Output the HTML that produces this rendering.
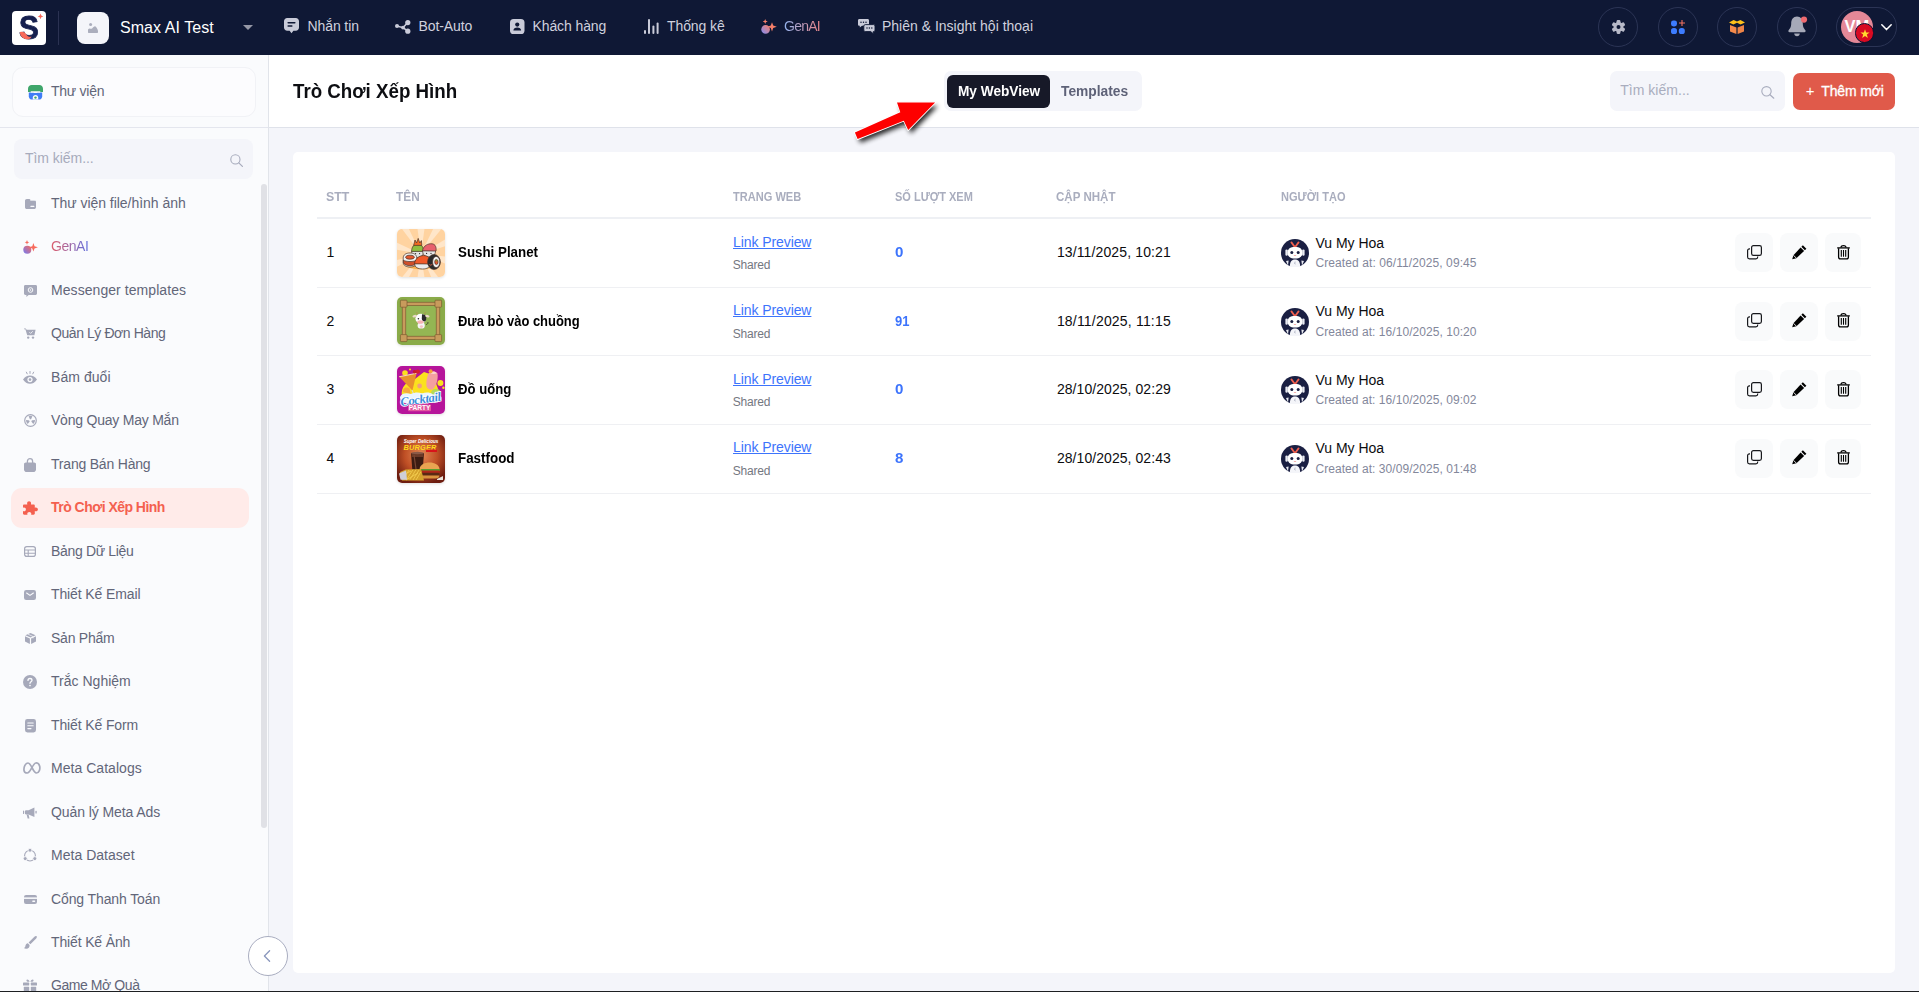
<!DOCTYPE html>
<html lang="vi"><head><meta charset="utf-8"><title>Trò Chơi Xếp Hình</title>
<style>
*{box-sizing:border-box;margin:0;padding:0}
html,body{width:1919px;height:992px;overflow:hidden}
body{font-family:"Liberation Sans",sans-serif;background:#f4f5fa;position:relative;color:#111}
.abs{position:absolute}
svg{display:block;overflow:visible}
#nav{position:absolute;left:0;top:0;width:1919px;height:55px;background:#0f1835}
#nav .t{position:absolute;top:15px;height:22px;line-height:22px;color:#cfd1de;font-size:14px;white-space:nowrap;letter-spacing:-.1px}
#nav .c{position:absolute;top:7px;width:40px;height:40px;border-radius:20px;border:1px solid #2b3455}
#side{position:absolute;left:0;top:55px;width:269px;height:937px;background:#fafbfd;border-right:1px solid #e1e4ea}
.it{position:absolute;left:51px;font-size:14px;color:#626679;white-space:nowrap;height:22px;line-height:22px;letter-spacing:-.05px}
#hdr{position:absolute;left:269px;top:55px;width:1650px;height:73px;background:#fff;border-bottom:1px solid #dfe2ea}
#card{position:absolute;left:293px;top:152px;width:1602px;height:820.5px;background:#fff;border-radius:5px}
.th{position:absolute;top:188px;height:16px;line-height:16px;font-size:11.5px;font-weight:bold;color:#a9adbe;white-space:nowrap}
.ln{position:absolute;left:317px;width:1554px;height:1px;background:#eff0f3}
.tx{position:absolute;white-space:nowrap;height:20px;line-height:20px;font-size:14px;color:#0c0c0f}
.sm{position:absolute;white-space:nowrap;height:16px;line-height:16px;font-size:12px;color:#7e8299}
.btn{position:absolute;height:39px;border-radius:8px;background:#f9fafb}

</style></head><body>
<div id="nav">
<!-- logo -->
<div class="abs" style="left:12px;top:11px;width:34px;height:34px;background:#fff;border-radius:4px;overflow:hidden">
<span class="abs" style="left:6.9px;top:-.4px;font-size:33px;line-height:34px;font-weight:bold;color:#16204f;-webkit-text-stroke:.9px #16204f;transform:scaleX(.9);transform-origin:0 0">S</span>
<svg class="abs" style="left:0;top:0" width="34" height="34" viewBox="0 0 34 34"><path d="M7.8 21.2 C10.5 20.3 13.2 21.2 14.3 23.4 C15.6 25.6 17.8 26.2 19.6 25.4 C18.6 28 15.4 29 12.6 27.8 C9.8 26.7 8 24.2 7.8 21.2Z" fill="#f8695a"/><path d="M28.5 2.6 L29.3 4.6 L31.3 5.4 L29.3 6.2 L28.5 8.2 L27.7 6.2 L25.7 5.4 L27.7 4.6Z" fill="#f8695a"/></svg>
</div>
<div class="abs" style="left:58px;top:11px;width:1px;height:34px;background:#2b3252"></div>
<div class="abs" style="left:77px;top:12px;width:32px;height:32px;background:#f4f5fa;border-radius:8px"></div>
<svg class="abs" style="left:88px;top:23px" width="10" height="10" viewBox="0 0 10 10"><circle cx="2.6" cy="1.6" r="1.5" fill="#abaebd"/><path d="M0.6 10 C0.1 10 0 9.6 0 9.2 V7 C0 6.3 0.7 5.4 1.5 5.4 C2.3 5.4 2.8 5.8 3.4 5.8 C4.2 5.8 5.6 3.2 6.9 3.2 C8.2 3.2 10 6.6 10 8.2 V9.2 C10 9.7 9.8 10 9.3 10Z" fill="#abaebd"/></svg>
<div class="t" style="left:120px;top:16px;font-size:16px;color:#fff;letter-spacing:.05px;line-height:24px;height:24px">Smax AI Test</div>
<svg class="abs" style="left:243px;top:25px" width="10" height="5" viewBox="0 0 10 5"><path d="M0 0H10L5 5Z" fill="#9597a6"/></svg>

<!-- Nhan tin -->
<svg class="abs" style="left:283.5px;top:18px" width="15" height="15.5" viewBox="0 0 15 15.5"><path d="M3.2 0H11.8C13.6 0 15 1.4 15 3.2V9.6C15 11.4 13.6 12.8 11.8 12.8H9.4L7.5 15.2L5.6 12.8H3.2C1.4 12.8 0 11.4 0 9.6V3.2C0 1.4 1.4 0 3.2 0Z" fill="#c9cbd9"/><rect x="3.4" y="4" width="8.2" height="1.6" rx=".8" fill="#0f1835"/><rect x="3.4" y="7.2" width="5.2" height="1.6" rx=".8" fill="#0f1835"/></svg>
<div class="t" style="left:307.5px">Nhắn tin</div>
<!-- Bot-auto -->
<svg class="abs" style="left:395px;top:19.5px" width="16" height="14" viewBox="0 0 16 14"><g fill="#c9cbd9"><circle cx="12.8" cy="2.6" r="2.6"/><circle cx="12.8" cy="11.2" r="2.6"/><circle cx="2" cy="6" r="2"/><circle cx="8" cy="7.6" r="1.9"/></g><path d="M2 6 L8 7.6 L12.8 2.6 M8 7.6 L12.8 11.2" stroke="#c9cbd9" stroke-width="1.5" fill="none"/></svg>
<div class="t" style="left:418.5px">Bot-Auto</div>
<!-- Khach hang -->
<svg class="abs" style="left:509.5px;top:18.5px" width="14.5" height="15" viewBox="0 0 14.5 15"><rect width="14.5" height="15" rx="3.6" fill="#c9cbd9"/><circle cx="7.25" cy="5.6" r="2.1" fill="#0f1835"/><path d="M3.4 11.6C3.4 9.6 5.1 8.6 7.25 8.6C9.4 8.6 11.1 9.6 11.1 11.6Z" fill="#0f1835"/></svg>
<div class="t" style="left:532.5px">Khách hàng</div>
<!-- Thong ke -->
<svg class="abs" style="left:643.5px;top:18.5px" width="15" height="15" viewBox="0 0 15 15"><g fill="#c9cbd9"><rect x="0" y="11" width="2" height="4" rx="1"/><rect x="4" y="0" width="2" height="15" rx="1"/><rect x="8.4" y="6.5" width="2" height="8.5" rx="1"/><rect x="12.6" y="3.5" width="2" height="11.5" rx="1"/></g></svg>
<div class="t" style="left:667px">Thống kê</div>
<!-- GenAI -->
<svg class="abs" style="left:760.5px;top:19px" width="16" height="15" viewBox="0 0 16 15"><defs><linearGradient id="gg1" x1="0" y1="1" x2="1" y2="0"><stop offset="0" stop-color="#7f8cf5"/><stop offset="1" stop-color="#f7806a"/></linearGradient></defs><circle cx="4.6" cy="10.4" r="4.3" fill="url(#gg1)"/><path d="M11 3.2L12.2 6.6L15.8 7.8L12.2 9L11 12.4L9.8 9L6.4 7.8L9.8 6.6Z" fill="#f7806a"/><path d="M4.2 0L4.9 1.8L6.7 2.5L4.9 3.2L4.2 5L3.5 3.2L1.7 2.5L3.5 1.8Z" fill="#f7806a"/></svg>
<div class="t" style="left:784px;letter-spacing:-.75px;background:linear-gradient(90deg,#92b3ee,#e8868a);-webkit-background-clip:text;background-clip:text;color:transparent">GenAI</div>
<!-- Phien -->
<svg class="abs" style="left:857.5px;top:18.5px" width="17" height="15" viewBox="0 0 17 15"><path d="M1.4 0H9.6C10.4 0 11 .6 11 1.4V5.4C11 6.2 10.4 6.8 9.6 6.8H4L1.8 8.6V6.8H1.4C.6 6.8 0 6.2 0 5.4V1.4C0 .6 .6 0 1.4 0Z" fill="#c9cbd9"/><path d="M7.2 5.6H15.6C16.4 5.6 17 6.2 17 7V11.2C17 12 16.4 12.6 15.6 12.6H15.2V14.8L12.8 12.6H7.2C6.4 12.6 5.8 12 5.8 11.2V7C5.8 6.2 6.4 5.6 7.2 5.6Z" fill="#c9cbd9" stroke="#0f1835" stroke-width=".9"/><g fill="#0f1835"><circle cx="3" cy="3.2" r=".75"/><circle cx="5.5" cy="3.2" r=".75"/><circle cx="8" cy="3.2" r=".75"/><circle cx="9" cy="9.1" r=".75"/><circle cx="11.4" cy="9.1" r=".75"/><circle cx="13.8" cy="9.1" r=".75"/></g></svg>
<div class="t" style="left:882px;letter-spacing:0">Phiên &amp; Insight hội thoại</div>

<!-- right icons -->
<div class="c" style="left:1598px"></div>
<svg class="abs" style="left:1610.5px;top:19.5px" width="15" height="14" viewBox="-7.5 -7 15 14"><g fill="#b8bac8"><circle r="4.9"/><g id="tth"><rect x="-1.9" y="-6.9" width="3.8" height="13.8" rx="1.1"/></g><use href="#tth" transform="rotate(60)"/><use href="#tth" transform="rotate(120)"/></g><circle r="2" fill="#0f1835"/></svg>
<div class="c" style="left:1658px"></div>
<svg class="abs" style="left:1671px;top:20px" width="14.5" height="14" viewBox="0 0 14.5 14"><g fill="#3d7cff"><rect x="0" y="0.4" width="6" height="6" rx="2.4"/><rect x="0" y="8" width="6" height="6" rx="2.6"/><rect x="7.8" y="8" width="6" height="6" rx="2.6"/></g><path d="M11 0V6M8 3H14" stroke="#f37360" stroke-width="1.1" fill="none"/></svg>
<div class="c" style="left:1717px"></div>
<svg class="abs" style="left:1729px;top:20px" width="16" height="14" viewBox="0 0 16 14"><path d="M0 2.4L4.6 0L8 1.6L11.4 0L16 2.4L11.6 4.4L8 2.8L4.4 4.4Z" fill="#ffc21a"/><path d="M1 5L7.4 7.4V14L1 11.4Z" fill="#f58a4b"/><path d="M15 5L8.6 7.4V14L15 11.4Z" fill="#ee8447"/></svg>
<div class="c" style="left:1777px"></div>
<svg class="abs" style="left:1788px;top:15.5px" width="19" height="21" viewBox="0 0 19 21"><path d="M9 0.5C5.2 0.5 3.2 3.6 3.2 7.2C3.2 11.4 1.8 12.6 .6 14.2C0 15 .5 16.2 1.6 16.2H16.4C17.5 16.2 18 15 17.4 14.2C16.2 12.6 14.8 11.4 14.8 7.2C14.8 3.6 12.8 .5 9 .5Z" fill="#a6a9b8"/><path d="M6.2 17.6H11.8C11.8 19.2 10.6 20.3 9 20.3C7.4 20.3 6.2 19.2 6.2 17.6Z" fill="#a6a9b8"/><circle cx="16" cy="3.6" r="3.1" fill="#ee6a6f"/></svg>
<div class="abs" style="left:1836px;top:7px;width:61px;height:40px;border-radius:20px;border:1px solid #2b3455"></div>
<div class="abs" style="left:1841px;top:11px;width:32px;height:32px;border-radius:16px;background:#e58b9b;color:#fff;font-weight:bold;font-size:16.5px;line-height:30.5px;padding-left:3.6px;overflow:hidden;letter-spacing:-.2px;background:#e48897">VM</div>
<div class="abs" style="left:1855.1px;top:23.2px;width:19.4px;height:19.4px;border-radius:10px;background:#d80a22;border:1.8px solid #0b1130"></div>
<svg class="abs" style="left:1859.9px;top:28.9px" width="10" height="10" viewBox="-4 -4 8 8"><path d="M0 -3.9L.9 -1.2H3.7L1.45 .45L2.3 3.15L0 1.5L-2.3 3.15L-1.45 .45L-3.7 -1.2H-.9Z" fill="#ffd92e"/></svg>
<svg class="abs" style="left:1881px;top:24px" width="11" height="7" viewBox="0 0 11 7"><path d="M.8 .8L5.5 5.6L10.2 .8" stroke="#fff" stroke-width="1.5" fill="none" stroke-linecap="round" stroke-linejoin="round"/></svg>
</div>
<div id="side">
<div class="abs" style="left:11.5px;top:12px;width:244px;height:49.5px;border:1px solid #f1f2f6;border-radius:11px;background:#fcfcfe"></div>
<svg class="abs" style="left:28.3px;top:29.8px" width="15" height="15" viewBox="0 0 15 15"><path d="M3.6 0H11.4C13.4 0 15 1.6 15 3.6V7H0V3.6C0 1.6 1.6 0 3.6 0Z" fill="#3fa66b"/><path d="M.8 7.6H14.2V11.2C14.2 13.2 12.8 14.6 10.8 14.6H4.2C2.2 14.6 .8 13.2 .8 11.2Z" fill="#3f7df6"/><path d="M2.6 6.2C2.6 7.6 4 8.2 5 7.2C6 8.4 9 8.4 10 7.2C11 8.2 12.4 7.6 12.4 6.2Z" fill="#fafbfd"/><path d="M4.8 14.6V12.6C4.8 11 6 10 7.5 10C9 10 10.2 11 10.2 12.6V14.6Z" fill="#fafbfd"/><circle cx="7.5" cy="12.6" r="1.2" fill="#3fa66b"/></svg>
<div class="it" style="left:51px;top:25px;letter-spacing:-.25px">Thư viện</div>
<div class="abs" style="left:0;top:72px;width:268px;height:1px;background:#e4e6ee"></div>
<div class="abs" style="left:14px;top:84px;width:239px;height:40px;border-radius:8px;background:#f4f5fa"></div>
<div class="it" style="left:25px;top:92px;color:#a7abbc">Tìm kiếm...</div>
<svg class="abs" style="left:229.5px;top:99px" width="13" height="13" viewBox="0 0 13 13"><circle cx="5.4" cy="5.4" r="4.6" fill="none" stroke="#a7abbc" stroke-width="1.1"/><path d="M8.8 8.8L12.4 12.4" stroke="#a7abbc" stroke-width="1.2" stroke-linecap="round"/></svg>
<div class="abs" style="left:261px;top:129px;width:6px;height:644px;border-radius:3px;background:#e0e1e6"></div>
<div class="abs" style="left:11px;top:433px;width:238px;height:39.5px;border-radius:11px;background:#ffebe9"></div>
<svg class="abs" style="left:24.5px;top:143.5px" width="11" height="10" viewBox="0 0 11 10"><path d="M1.8 0H4.6L5.8 1.2H9.2C10.2 1.2 11 2 11 3V8.2C11 9.2 10.2 10 9.2 10H1.8C.8 10 0 9.2 0 8.2V1.8C0 .8 .8 0 1.8 0Z" fill="#a6a9ba"/><rect x="5.4" y="6.8" width="4" height="1.1" rx=".5" fill="#fafbfd"/><path d="M5.2 1.4H10.2" stroke="#fafbfd" stroke-width=".6"/></svg><div class="it" style="top:137.00px;letter-spacing:-0.035px">Thư viện file/hình ảnh</div>
<svg class="abs" style="left:22.5px;top:184.5px" width="15" height="14" viewBox="0 0 15 14"><defs><linearGradient id="gg2" x1="0" y1="1" x2="1" y2="0"><stop offset="0" stop-color="#6f7bf7"/><stop offset="1" stop-color="#f76a5c"/></linearGradient></defs><circle cx="4.3" cy="9.8" r="4" fill="url(#gg2)"/><path d="M10.4 3L11.5 6.2L14.9 7.3L11.5 8.4L10.4 11.6L9.3 8.4L6 7.3L9.3 6.2Z" fill="#f76a5c"/><path d="M4 0L4.65 1.7L6.3 2.35L4.65 3L4 4.7L3.35 3L1.7 2.35L3.35 1.7Z" fill="#f76a5c"/></svg><div class="it" style="top:180.00px;letter-spacing:-0.461px;background:linear-gradient(90deg,#de5d6a,#6470dc);-webkit-background-clip:text;background-clip:text;color:transparent">GenAI</div>
<svg class="abs" style="left:23.5px;top:229.5px" width="13" height="12" viewBox="0 0 13 12"><path d="M1.4 0H11.6C12.4 0 13 .6 13 1.4V8.6C13 9.4 12.4 10 11.6 10H4.6L2.4 12V10H1.4C.6 10 0 9.4 0 8.6V1.4C0 .6 .6 0 1.4 0Z" fill="#a6a9ba"/><circle cx="6.5" cy="5" r="2.3" fill="none" stroke="#fafbfd" stroke-width="1"/><circle cx="6.5" cy="5" r=".8" fill="#fafbfd"/></svg><div class="it" style="top:224.00px;letter-spacing:0.066px">Messenger templates</div>
<svg class="abs" style="left:24.0px;top:273.0px" width="12" height="11" viewBox="0 0 12 11"><path d="M0 .4H1.8L2.6 1.8H11.6L10.4 7.2H3.2L1.4 1.2H0Z" fill="#a6a9ba"/><circle cx="4.2" cy="9.6" r="1.2" fill="#a6a9ba"/><circle cx="9" cy="9.6" r="1.2" fill="#a6a9ba"/><path d="M5.4 4.2L6.6 5.4L8.8 3.2" stroke="#fafbfd" stroke-width=".8" fill="none"/></svg><div class="it" style="top:267.00px;letter-spacing:-0.428px">Quản Lý Đơn Hàng</div>
<svg class="abs" style="left:23.0px;top:316.0px" width="14" height="13" viewBox="0 0 14 13"><path d="M0 8.6C1.8 5.8 4.2 4.4 7 4.4C9.8 4.4 12.2 5.8 14 8.6C12.2 11.4 9.8 12.8 7 12.8C4.2 12.8 1.8 11.4 0 8.6Z" fill="#a6a9ba"/><circle cx="7" cy="8.6" r="2.6" fill="#fafbfd"/><circle cx="7" cy="8.6" r="1.3" fill="#a6a9ba"/><path d="M7 0V2.8M3.2 .8L4.4 3.2M10.8 .8L9.6 3.2" stroke="#a6a9ba" stroke-width="1" fill="none"/></svg><div class="it" style="top:311.00px;letter-spacing:0.055px">Bám đuổi</div>
<svg class="abs" style="left:23.5px;top:359.0px" width="13" height="13" viewBox="0 0 13 13"><circle cx="6.5" cy="6.5" r="5.8" fill="none" stroke="#a6a9ba" stroke-width="1.2"/><g fill="#a6a9ba"><path d="M6.5 6.5L4.6 2.2A4.6 4.6 0 0 1 8.4 2.2Z"/><path d="M6.5 6.5L11 6A4.6 4.6 0 0 1 9.3 10Z"/><path d="M6.5 6.5L3.7 10A4.6 4.6 0 0 1 2 6Z"/></g><circle cx="6.5" cy="6.5" r="1.2" fill="#fafbfd"/></svg><div class="it" style="top:354.00px;letter-spacing:-0.224px">Vòng Quay May Mắn</div>
<svg class="abs" style="left:24.0px;top:402.5px" width="12" height="14" viewBox="0 0 12 14"><path d="M1.8 4.6H10.2C11.2 4.6 12 5.4 12 6.4V11.4C12 12.8 10.8 14 9.4 14H2.6C1.2 14 0 12.8 0 11.4V6.4C0 5.4 .8 4.6 1.8 4.6Z" fill="#a6a9ba"/><path d="M3.4 5.6V3.4C3.4 1.8 4.5 .7 6 .7C7.5 .7 8.6 1.8 8.6 3.4V5.6" stroke="#a6a9ba" stroke-width="1.3" fill="none"/></svg><div class="it" style="top:398.00px;letter-spacing:-0.201px">Trang Bán Hàng</div>
<svg class="abs" style="left:22.5px;top:445.5px" width="15" height="14" viewBox="0 0 15 14"><path d="M1.2 3.4H4.3C3.7 1.6 4.6 .2 6.1 .2C7.6 .2 8.5 1.6 7.9 3.4H10.6C11.3 3.4 11.8 3.9 11.8 4.6V6.7C13.5 6.1 14.9 7 14.9 8.4C14.9 9.8 13.5 10.7 11.8 10.1V12.6C11.8 13.3 11.3 13.8 10.6 13.8H8.1C8.7 12.2 7.8 11 6.3 11C4.8 11 3.9 12.2 4.5 13.8H1.2C.5 13.8 0 13.3 0 12.6V10C1.6 10.6 2.9 9.8 2.9 8.4C2.9 7 1.6 6.2 0 6.8V4.6C0 3.9 .5 3.4 1.2 3.4Z" fill="#f4604f"/></svg><div class="it" style="top:441.00px;letter-spacing:-0.52px;color:#f4604f;font-weight:bold">Trò Chơi Xếp Hình</div>
<svg class="abs" style="left:24.0px;top:491.0px" width="12" height="11" viewBox="0 0 12 11"><rect x=".6" y=".6" width="10.8" height="9.8" rx="2.2" fill="none" stroke="#a6a9ba" stroke-width="1.2"/><path d="M.6 4H11.4M.6 7.2H11.4M4.2 4V10.4" stroke="#a6a9ba" stroke-width="1.1" fill="none"/></svg><div class="it" style="top:485.00px;letter-spacing:-0.336px">Bảng Dữ Liệu</div>
<svg class="abs" style="left:24.0px;top:534.5px" width="12" height="10" viewBox="0 0 12 10"><rect width="12" height="10" rx="2.2" fill="#a6a9ba"/><path d="M2.6 3L6 5.4L9.4 3" stroke="#fafbfd" stroke-width="1.1" fill="none" stroke-linecap="round"/></svg><div class="it" style="top:528.00px;letter-spacing:-0.11px">Thiết Kế Email</div>
<svg class="abs" style="left:24.5px;top:578.0px" width="11" height="11" viewBox="0 0 11 11"><path d="M5.5 0L10.6 2.2L5.5 4.6L.4 2.2Z" fill="#a6a9ba"/><path d="M0 3.2L4.9 5.5V11L0 8.6Z" fill="#a6a9ba"/><path d="M11 3.2L6.1 5.5V11L11 8.6Z" fill="#a6a9ba"/><path d="M2.8 1.1L8 3.5V5.4" stroke="#fafbfd" stroke-width=".7" fill="none"/></svg><div class="it" style="top:572.00px;letter-spacing:-0.234px">Sản Phẩm</div>
<svg class="abs" style="left:23.0px;top:619.5px" width="14" height="14" viewBox="0 0 14 14"><circle cx="7" cy="7" r="7" fill="#a6a9ba"/><path d="M5 5.4C5 4.2 5.9 3.5 7 3.5C8.1 3.5 9 4.2 9 5.3C9 6.7 7 6.8 7 8.3" stroke="#fafbfd" stroke-width="1.3" fill="none" stroke-linecap="round"/><circle cx="7" cy="10.5" r=".85" fill="#fafbfd"/></svg><div class="it" style="top:615.00px;letter-spacing:0.016px">Trắc Nghiệm</div>
<svg class="abs" style="left:24.5px;top:663.8px" width="11" height="13.5" viewBox="0 0 11 13.5"><rect width="11" height="13.5" rx="2.4" fill="#a6a9ba"/><path d="M2.8 4H8.2M2.8 6.8H8.2M2.8 9.6H6" stroke="#fafbfd" stroke-width="1.1" fill="none" stroke-linecap="round"/></svg><div class="it" style="top:659.00px;letter-spacing:-0.123px">Thiết Kế Form</div>
<svg class="abs" style="left:22.9px;top:706.9px" width="17.8" height="12" viewBox="0 0 17.8 12"><path d="M1 8.4C.6 5 2.4 1 5 1C8.2 1 10.2 11 13.4 11C16.2 11 17.4 7 16.6 4C16 2 14.4.8 12.8 1C9.6 1.6 7.6 11 4.2 11C2.4 11 1.2 10 1 8.4Z" fill="none" stroke="#a6a9ba" stroke-width="1.7" stroke-linejoin="round"/></svg><div class="it" style="top:702.00px;letter-spacing:0.04px">Meta Catalogs</div>
<svg class="abs" style="left:23.0px;top:751.5px" width="14" height="12" viewBox="0 0 14 12"><path d="M3.2 3.2H5.6L11.4 .4V10L5.6 7.4H3.2C2.4 7.4 1.8 6.8 1.8 6V4.6C1.8 3.8 2.4 3.2 3.2 3.2Z" fill="#a6a9ba"/><path d="M3.6 7.6L4.6 11.4H6.4L5.6 7.6Z" fill="#a6a9ba"/><rect x="0" y="3.6" width="1" height="3.4" rx=".5" fill="#a6a9ba"/><rect x="12.4" y="3.8" width="1.3" height="2.8" rx=".6" fill="#a6a9ba"/></svg><div class="it" style="top:746.00px;letter-spacing:-0.082px">Quản lý Meta Ads</div>
<svg class="abs" style="left:23.0px;top:793.3px" width="14" height="14.4" viewBox="0 0 14 14.4"><circle cx="7" cy="7.6" r="5.4" fill="none" stroke="#a6a9ba" stroke-width="1.1"/><g fill="#a6a9ba" stroke="#fafbfd" stroke-width=".9"><circle cx="7" cy="2.2" r="2"/><circle cx="2.2" cy="10.6" r="2"/><circle cx="11.8" cy="10.6" r="2"/></g></svg><div class="it" style="top:789.00px;letter-spacing:0.028px">Meta Dataset</div>
<svg class="abs" style="left:23.5px;top:840.0px" width="13" height="9" viewBox="0 0 13 9"><rect width="13" height="9" rx="2" fill="#a6a9ba"/><rect x="0" y="2.4" width="13" height="1.5" fill="#fafbfd"/><rect x="8.2" y="5.6" width="3" height="1.3" rx=".6" fill="#fafbfd"/></svg><div class="it" style="top:833.00px;letter-spacing:-0.113px">Cổng Thanh Toán</div>
<svg class="abs" style="left:23.5px;top:881.0px" width="13" height="13" viewBox="0 0 13 13"><path d="M12.6 .3C13.2.9 12.8 1.8 12.2 2.4L6.4 8.2L4.6 6.4L10.4.8C11 .2 12 -.2 12.6 .3Z" fill="#a6a9ba"/><path d="M3.9 7.2L5.6 8.9C5.8 11 4.4 12.6 2.4 12.8C1.4 12.9.4 12.6 0 12C1.2 11.6 1.3 10.6 1.5 9.6C1.7 8.4 2.6 7.4 3.9 7.2Z" fill="#a6a9ba"/></svg><div class="it" style="top:876.00px;letter-spacing:-0.145px">Thiết Kế Ảnh</div>
<svg class="abs" style="left:23.0px;top:924.0px" width="14" height="13" viewBox="0 0 14 13"><rect x="0" y="3.6" width="6.2" height="3" rx=".6" fill="#a6a9ba"/><rect x="7.8" y="3.6" width="6.2" height="3" rx=".6" fill="#a6a9ba"/><rect x=".8" y="7.8" width="5.4" height="5.2" rx=".6" fill="#a6a9ba"/><rect x="7.8" y="7.8" width="5.4" height="5.2" rx=".6" fill="#a6a9ba"/><path d="M6.6 2.8C5.2 2.8 3.4 2.6 3.4 1.4C3.4 0 5.8 0 6.6 2.8ZM7.4 2.8C8.8 2.8 10.6 2.6 10.6 1.4C10.6 0 8.2 0 7.4 2.8Z" fill="#a6a9ba"/></svg><div class="it" style="top:919.00px;letter-spacing:-0.429px">Game Mở Quà</div>
<div class="abs" style="left:248px;top:880.5px;width:40px;height:40px;border-radius:20px;background:#fff;border:1px solid #a9adc0"></div>
<svg class="abs" style="left:263px;top:894.5px" width="8" height="12" viewBox="0 0 8 12"><path d="M6.6 .8L1.4 6L6.6 11.2" stroke="#8a97bd" stroke-width="1.3" fill="none" stroke-linecap="round" stroke-linejoin="round"/></svg>
</div>
<div id="hdr">
<div class="abs" style="left:23.70px;top:21.37px;height:30px;line-height:30px;font-size:20px;color:#0d0e12;white-space:nowrap;font-weight:bold;transform:scaleX(0.9364);transform-origin:0 0">Trò Chơi Xếp Hình</div><div class="abs" style="left:675px;top:16px;width:198px;height:39.5px;border-radius:7px;background:#f4f5fa"></div>
<div class="abs" style="left:678px;top:19.5px;width:103px;height:33px;border-radius:6px;background:#171928"></div>
<div class="abs" style="left:688.60px;top:26.05px;height:21px;line-height:21px;font-size:14px;color:#fff;white-space:nowrap;font-weight:bold;transform:scaleX(0.9751);transform-origin:0 0">My WebView</div><div class="abs" style="left:791.60px;top:26.05px;height:21px;line-height:21px;font-size:14px;color:#5e6278;white-space:nowrap;font-weight:bold;transform:scaleX(0.9851);transform-origin:0 0">Templates</div><div class="abs" style="left:1341px;top:16px;width:175px;height:40px;border-radius:7px;background:#f4f5fa"></div>
<div class="abs" style="left:1351.20px;top:24.95px;height:21px;line-height:21px;font-size:14px;color:#a9adbe;white-space:nowrap;letter-spacing:0.033px">Tìm kiếm...</div><svg class="abs" style="left:1492px;top:30.6px" width="13.4" height="12.8" viewBox="0 0 13.4 12.8"><circle cx="5.5" cy="5.3" r="4.7" fill="none" stroke="#a9adbe" stroke-width="1.1"/><path d="M9 8.7L12.8 12.2" stroke="#a9adbe" stroke-width="1.2" stroke-linecap="round"/></svg>
<div class="abs" style="left:1524px;top:18px;width:102px;height:36.7px;border-radius:7px;background:#e05a4a"></div>
<div class="abs" style="left:1536.80px;top:25.00px;height:22px;line-height:22px;font-size:15px;color:#fff;white-space:nowrap">+</div><div class="abs" style="left:1552.30px;top:25.55px;height:21px;line-height:21px;font-size:14px;color:#fff;white-space:nowrap;letter-spacing:-0.155px;-webkit-text-stroke:.3px #fff">Thêm mới</div></div>
<!-- red arrow annotation -->
<svg class="abs" style="left:840px;top:90px;z-index:5" width="120" height="70" viewBox="840 90 120 70">
<defs><filter id="ash" filterUnits="userSpaceOnUse" x="840" y="90" width="120" height="70"><feGaussianBlur stdDeviation="2.7"/></filter></defs>
<path d="M857.6 139.1L854.9 132.4L900.3 112.2L897 102.5L935.1 102.5L908.2 130L903.8 120.7Z" fill="#000" opacity=".85" filter="url(#ash)" transform="translate(2.8,3.6)"/>
<path d="M857.6 139.1L854.9 132.4L900.3 112.2L897 102.5L935.1 102.5L908.2 130L903.8 120.7Z" fill="#fe0000" stroke="#fff" stroke-width="1.6" stroke-linejoin="miter" paint-order="stroke"/>
</svg>
<div id="card"></div>
<div class="abs" style="left:326.10px;top:186.70px;height:20px;line-height:20px;font-size:13px;color:#a9adbe;white-space:nowrap;font-weight:bold;transform:scaleX(0.9486);transform-origin:0 0">STT</div><div class="abs" style="left:396.10px;top:186.70px;height:20px;line-height:20px;font-size:13px;color:#a9adbe;white-space:nowrap;font-weight:bold;transform:scaleX(0.9115);transform-origin:0 0">TÊN</div><div class="abs" style="left:732.70px;top:186.70px;height:20px;line-height:20px;font-size:13px;color:#a9adbe;white-space:nowrap;font-weight:bold;transform:scaleX(0.8507);transform-origin:0 0">TRANG WEB</div><div class="abs" style="left:894.90px;top:186.70px;height:20px;line-height:20px;font-size:13px;color:#a9adbe;white-space:nowrap;font-weight:bold;transform:scaleX(0.8473);transform-origin:0 0">SỐ LƯỢT XEM</div><div class="abs" style="left:1056.10px;top:186.70px;height:20px;line-height:20px;font-size:13px;color:#a9adbe;white-space:nowrap;font-weight:bold;transform:scaleX(0.8889);transform-origin:0 0">CẬP NHẬT</div><div class="abs" style="left:1280.60px;top:186.70px;height:20px;line-height:20px;font-size:13px;color:#a9adbe;white-space:nowrap;font-weight:bold;transform:scaleX(0.8482);transform-origin:0 0">NGƯỜI TẠO</div>
<div class="ln" style="top:217px;height:2px;background:#eef0f4"></div>
<div class="ln" style="top:287px"></div>
<div class="abs" style="left:326.60px;top:241.85px;height:21px;line-height:21px;font-size:14px;color:#0c0c0f;white-space:nowrap">1</div><svg class="abs" style="left:397px;top:229px;border-radius:5px;overflow:hidden;box-shadow:0 1px 3px rgba(0,0,0,.13)" width="48" height="48" viewBox="0 0 48 48"><rect width="48" height="48" fill="#ffd3a0"/><g fill="#ffe6c9"><path d="M24 25L20 -4H28Z"/><path d="M24 25L38 -4L46 -2Z"/><path d="M24 25L52 8V16Z"/><path d="M24 25L52 28V36Z"/><path d="M24 25L44 52H36Z"/><path d="M24 25L28 52H20Z"/><path d="M24 25L10 52H2Z"/><path d="M24 25L-4 40V32Z"/><path d="M24 25L-4 20V12Z"/><path d="M24 25L2 -4H10Z"/></g>
<ellipse cx="24" cy="37" rx="14" ry="3.2" fill="#f9b04e"/>
<g stroke="#4a3328" stroke-width=".7">
<path d="M14.6 22C14.6 26.4 17 28.6 20.6 28.6C24.2 28.6 26.6 26.4 26.6 22Z" fill="#e3e3e3"/><path d="M14.6 22.4C14.6 17.4 17.4 15 20.6 15C23.8 15 26.6 17.4 26.6 22.4Z" fill="#8fbd3f"/><path d="M16.6 16.4L18 11L19.6 14L21.2 9.4L22.8 14L24.4 11.6L24.8 16.4Z" fill="#f26a21"/>
<path d="M25.6 21.6C25.6 26 28.4 28 32 28C35.6 28 38.6 26 38.6 21.6Z" fill="#e6e6e6"/><path d="M25.4 21.8C26.6 16.4 31 14.4 35.2 14.8C38.4 15.2 39.6 18.4 39 22Z" fill="#e8616d"/>
<path d="M6.2 29C6.2 25.6 9.2 24 13 24C16.8 24 19.8 25.6 19.8 29V33.6C19.8 36.4 16.8 38 13 38C9.2 38 6.2 36.4 6.2 33.6Z" fill="#f3f3f3"/><path d="M6.4 31C8.4 33 17.6 33 19.6 31V34C17.6 37.6 8.4 37.6 6.4 34Z" fill="#cf4f2a"/><ellipse cx="13" cy="28.2" rx="4.4" ry="2" fill="#e4572e"/>
<path d="M17.6 34.6C17.6 38.4 21 40 25.6 40C30.2 40 33.6 38 33.6 34.4Z" fill="#ececec"/><path d="M17.4 34.8C18.4 28.6 23.6 25.6 28.8 26.8C32.6 27.8 34.4 31 33.8 35Z" fill="#f15a29"/>
<ellipse cx="37" cy="33" rx="6.4" ry="7.4" fill="#2a2a2a"/><ellipse cx="39.2" cy="33" rx="3.6" ry="5.6" fill="#f3f3f3"/><ellipse cx="39.4" cy="33" rx="1.7" ry="2.6" fill="#e4572e"/><path d="M39 30.6L39.8 32.6" stroke="#6aa82e" stroke-width="1"/>
</g><circle cx="18.6" cy="24.6" r=".6" fill="#222"/><circle cx="22.6" cy="24.6" r=".6" fill="#222"/><circle cx="29.6" cy="24.4" r=".6" fill="#222"/><circle cx="34" cy="24.4" r=".6" fill="#222"/><path d="M32.4 35.4C33.4 36.6 34.6 36.4 35 35.2" stroke="#f26a4a" stroke-width=".8" fill="none"/></svg><div class="abs" style="left:458.10px;top:241.85px;height:21px;line-height:21px;font-size:14px;color:#000;white-space:nowrap;font-weight:bold;transform:scaleX(0.9520);transform-origin:0 0">Sushi Planet</div><div class="abs" style="left:733.00px;top:231.85px;height:21px;line-height:21px;font-size:14px;color:#3d74fc;white-space:nowrap;letter-spacing:-0.081px;text-decoration:underline;text-underline-offset:.6px;text-decoration-thickness:1px">Link Preview</div><div class="abs" style="left:732.70px;top:256.04px;height:18px;line-height:18px;font-size:12px;color:#74777f;white-space:nowrap;letter-spacing:-0.184px">Shared</div><div class="abs" style="left:895.20px;top:241.85px;height:21px;line-height:21px;font-size:14px;color:#3d74fc;white-space:nowrap;font-weight:bold;transform:scaleX(1.0774);transform-origin:0 0">0</div><div class="abs" style="left:1056.90px;top:241.85px;height:21px;line-height:21px;font-size:14px;color:#0c0c0f;white-space:nowrap;letter-spacing:0.127px">13/11/2025, 10:21</div><svg class="abs" style="left:1281px;top:238.8px" width="28" height="28" viewBox="0 0 28 28"><circle cx="14" cy="14" r="14" fill="#1a1f42"/><path d="M10.4 3.4L14 8.2L17.6 3.4" stroke="#f0604f" stroke-width="1.8" fill="none" stroke-linecap="round" stroke-linejoin="round"/><rect x="4.4" y="10.4" width="2.4" height="6.4" rx="1.2" fill="#e9ebf2"/><rect x="21.2" y="10.4" width="2.4" height="6.4" rx="1.2" fill="#e9ebf2"/><rect x="6.6" y="8" width="14.8" height="11.4" rx="5.4" fill="#fff"/><circle cx="10.8" cy="13.4" r="1.5" fill="#1a1f42"/><circle cx="17.2" cy="13.4" r="1.5" fill="#1a1f42"/><rect x="12.8" y="16.2" width="2.4" height=".9" rx=".4" fill="#f29a94"/><path d="M8.8 28C8.8 23 10.6 20.6 14 20.6C17.4 20.6 19.2 23 19.2 28Z" fill="#f4f5f9"/><path d="M5 22L7.6 21.4L7 26.6Z" fill="#e9ebf2"/><path d="M23 22L20.4 21.4L21 26.6Z" fill="#e9ebf2"/><path d="M14.2 22.6L13.6 24.6L14.6 25" stroke="#8c90a8" stroke-width=".6" fill="none"/></svg><div class="abs" style="left:1315.50px;top:232.65px;height:21px;line-height:21px;font-size:14px;color:#0c0c0f;white-space:nowrap;letter-spacing:-0.015px">Vu My Hoa</div><div class="abs" style="left:1315.50px;top:253.84px;height:18px;line-height:18px;font-size:12px;color:#83879b;white-space:nowrap;letter-spacing:0.087px">Created at: 06/11/2025, 09:45</div><div class="btn" style="left:1735px;top:232.8px;width:38px"></div><div class="btn" style="left:1780px;top:232.8px;width:38px"></div><div class="btn" style="left:1825px;top:232.8px;width:36px"></div><svg class="abs" style="left:1746.5px;top:244.5px" width="15" height="14.5" viewBox="0 0 15 14.5"><rect x="4.6" y=".6" width="9.8" height="9.8" rx="1.8" fill="none" stroke="#17181c" stroke-width="1.2"/><path d="M3 3.8H2.4C1.4 3.8 .6 4.6 .6 5.6V12.1C.6 13.1 1.4 13.9 2.4 13.9H8.9C9.9 13.9 10.7 13.1 10.7 12.1V11.6" fill="none" stroke="#17181c" stroke-width="1.2"/></svg><svg class="abs" style="left:1791.5px;top:244.5px" width="15" height="14.5" viewBox="0 0 15 14.5"><path d="M10.9 .3L14.4 3.7L12.9 5.2L9.4 1.8Z" fill="#000"/><path d="M8.6 2.6L12.1 6L4.4 13.2L.2 14.3L1.4 10.2Z" fill="#000"/><path d="M1.4 10.2L4.4 13.2" stroke="#f9fafb" stroke-width=".9"/></svg><svg class="abs" style="left:1836.5px;top:244.5px" width="13" height="14.5" viewBox="0 0 13 14.5"><path d="M.2 2.9H12.8" stroke="#000" stroke-width="1.3"/><path d="M4 2.6C4 1.2 5 .6 6.5 .6C8 .6 9 1.2 9 2.6" stroke="#000" stroke-width="1.2" fill="none"/><path d="M1.6 3.2V12C1.6 13.1 2.4 13.9 3.5 13.9H9.5C10.6 13.9 11.4 13.1 11.4 12V3.2" stroke="#000" stroke-width="1.3" fill="none"/><path d="M4.3 5V11.8M6.5 5V11.8M8.7 5V11.8" stroke="#000" stroke-width="1.1"/></svg>
<div class="ln" style="top:355px"></div>
<div class="abs" style="left:326.60px;top:310.55px;height:21px;line-height:21px;font-size:14px;color:#0c0c0f;white-space:nowrap">2</div><svg class="abs" style="left:397px;top:297px;border-radius:5px;overflow:hidden;box-shadow:0 1px 3px rgba(0,0,0,.13)" width="48" height="48" viewBox="0 0 48 48"><rect width="48" height="48" fill="#8aab49"/><rect x="8" y="8" width="32" height="32" fill="#94b653"/><g fill="#c89b5c" stroke="#73522a" stroke-width=".6"><rect x="5" y="5.2" width="38" height="3.4"/><rect x="5" y="39.2" width="38" height="3.4"/><rect x="5.2" y="5" width="3.6" height="38"/><rect x="39.2" y="5" width="3.6" height="38"/><rect x="3.4" y="3.2" width="6.6" height="7" rx=".8"/><rect x="38" y="3.2" width="6.6" height="7" rx=".8"/><rect x="3.4" y="37.6" width="6.6" height="7" rx=".8"/><rect x="38" y="37.6" width="6.6" height="7" rx=".8"/></g>
<path d="M29.2 27.6C30.8 27.2 31.2 25.8 30.8 25" stroke="#3d3d2a" stroke-width=".9" fill="none"/>
<ellipse cx="24.2" cy="28.4" rx="3.6" ry="3.2" fill="#f6f6f6"/><ellipse cx="24.4" cy="29.6" rx="1.6" ry="1.3" fill="#f7c4c4"/><ellipse cx="23.8" cy="21.6" rx="5.4" ry="4.9" fill="#fdfdfd"/><path d="M25 17.2C28.6 17 30 20 29 23.2C27.8 25.4 25.2 24.6 24.8 22Z" fill="#2a2a2a"/><ellipse cx="23.4" cy="25" rx="3.2" ry="1.8" fill="#f6b3b3"/><ellipse cx="17.6" cy="19.2" rx="2.2" ry="1.2" fill="#ead7c8" transform="rotate(-15 17.6 19.2)"/><ellipse cx="30.4" cy="19.2" rx="2.2" ry="1.2" fill="#ead7c8" transform="rotate(15 30.4 19.2)"/><circle cx="21.4" cy="21.8" r=".8" fill="#222"/><path d="M20.4 16.8L19.6 15.2M27.6 16.8L28.4 15.2" stroke="#b58a52" stroke-width=".9"/></svg><div class="abs" style="left:458.10px;top:310.55px;height:21px;line-height:21px;font-size:14px;color:#000;white-space:nowrap;font-weight:bold;transform:scaleX(0.9256);transform-origin:0 0">Đưa bò vào chuồng</div><div class="abs" style="left:733.00px;top:299.85px;height:21px;line-height:21px;font-size:14px;color:#3d74fc;white-space:nowrap;letter-spacing:-0.081px;text-decoration:underline;text-underline-offset:.6px;text-decoration-thickness:1px">Link Preview</div><div class="abs" style="left:732.70px;top:324.74px;height:18px;line-height:18px;font-size:12px;color:#74777f;white-space:nowrap;letter-spacing:-0.184px">Shared</div><div class="abs" style="left:895.20px;top:310.55px;height:21px;line-height:21px;font-size:14px;color:#3d74fc;white-space:nowrap;font-weight:bold;transform:scaleX(0.9308);transform-origin:0 0">91</div><div class="abs" style="left:1056.90px;top:310.55px;height:21px;line-height:21px;font-size:14px;color:#0c0c0f;white-space:nowrap;letter-spacing:0.188px">18/11/2025, 11:15</div><svg class="abs" style="left:1281px;top:307.5px" width="28" height="28" viewBox="0 0 28 28"><circle cx="14" cy="14" r="14" fill="#1a1f42"/><path d="M10.4 3.4L14 8.2L17.6 3.4" stroke="#f0604f" stroke-width="1.8" fill="none" stroke-linecap="round" stroke-linejoin="round"/><rect x="4.4" y="10.4" width="2.4" height="6.4" rx="1.2" fill="#e9ebf2"/><rect x="21.2" y="10.4" width="2.4" height="6.4" rx="1.2" fill="#e9ebf2"/><rect x="6.6" y="8" width="14.8" height="11.4" rx="5.4" fill="#fff"/><circle cx="10.8" cy="13.4" r="1.5" fill="#1a1f42"/><circle cx="17.2" cy="13.4" r="1.5" fill="#1a1f42"/><rect x="12.8" y="16.2" width="2.4" height=".9" rx=".4" fill="#f29a94"/><path d="M8.8 28C8.8 23 10.6 20.6 14 20.6C17.4 20.6 19.2 23 19.2 28Z" fill="#f4f5f9"/><path d="M5 22L7.6 21.4L7 26.6Z" fill="#e9ebf2"/><path d="M23 22L20.4 21.4L21 26.6Z" fill="#e9ebf2"/><path d="M14.2 22.6L13.6 24.6L14.6 25" stroke="#8c90a8" stroke-width=".6" fill="none"/></svg><div class="abs" style="left:1315.50px;top:301.35px;height:21px;line-height:21px;font-size:14px;color:#0c0c0f;white-space:nowrap;letter-spacing:-0.015px">Vu My Hoa</div><div class="abs" style="left:1315.50px;top:322.54px;height:18px;line-height:18px;font-size:12px;color:#83879b;white-space:nowrap;letter-spacing:0.056px">Created at: 16/10/2025, 10:20</div><div class="btn" style="left:1735px;top:301.5px;width:38px"></div><div class="btn" style="left:1780px;top:301.5px;width:38px"></div><div class="btn" style="left:1825px;top:301.5px;width:36px"></div><svg class="abs" style="left:1746.5px;top:313.2px" width="15" height="14.5" viewBox="0 0 15 14.5"><rect x="4.6" y=".6" width="9.8" height="9.8" rx="1.8" fill="none" stroke="#17181c" stroke-width="1.2"/><path d="M3 3.8H2.4C1.4 3.8 .6 4.6 .6 5.6V12.1C.6 13.1 1.4 13.9 2.4 13.9H8.9C9.9 13.9 10.7 13.1 10.7 12.1V11.6" fill="none" stroke="#17181c" stroke-width="1.2"/></svg><svg class="abs" style="left:1791.5px;top:313.2px" width="15" height="14.5" viewBox="0 0 15 14.5"><path d="M10.9 .3L14.4 3.7L12.9 5.2L9.4 1.8Z" fill="#000"/><path d="M8.6 2.6L12.1 6L4.4 13.2L.2 14.3L1.4 10.2Z" fill="#000"/><path d="M1.4 10.2L4.4 13.2" stroke="#f9fafb" stroke-width=".9"/></svg><svg class="abs" style="left:1836.5px;top:313.2px" width="13" height="14.5" viewBox="0 0 13 14.5"><path d="M.2 2.9H12.8" stroke="#000" stroke-width="1.3"/><path d="M4 2.6C4 1.2 5 .6 6.5 .6C8 .6 9 1.2 9 2.6" stroke="#000" stroke-width="1.2" fill="none"/><path d="M1.6 3.2V12C1.6 13.1 2.4 13.9 3.5 13.9H9.5C10.6 13.9 11.4 13.1 11.4 12V3.2" stroke="#000" stroke-width="1.3" fill="none"/><path d="M4.3 5V11.8M6.5 5V11.8M8.7 5V11.8" stroke="#000" stroke-width="1.1"/></svg>
<div class="ln" style="top:424px"></div>
<div class="abs" style="left:326.60px;top:379.15px;height:21px;line-height:21px;font-size:14px;color:#0c0c0f;white-space:nowrap">3</div><svg class="abs" style="left:397px;top:366px;border-radius:5px;overflow:hidden;box-shadow:0 1px 3px rgba(0,0,0,.13)" width="48" height="48" viewBox="0 0 48 48"><rect width="48" height="48" fill="#b6159a"/><g fill="#fbe11e"><circle cx="8" cy="7" r="2.8"/><circle cx="13" cy="3.6" r="1"/><circle cx="43.4" cy="17" r="3"/><circle cx="46.4" cy="21.8" r="1.2"/><path d="M5 30C3 22 10 14 18 13L27 6L36 9L40 20C43 26 40 31 34 32L10 34Z"/></g>
<path d="M2 10.6L19.6 7.2L15.4 24.4Z" fill="#e8912d"/><path d="M2 10.2L19.6 6.8L19.8 7.8L2.4 11.2Z" fill="#f5d9b4"/><path d="M15 24L17.4 30" stroke="#d9d9e6" stroke-width="1"/>
<circle cx="20.8" cy="5.6" r="2.2" fill="#d41f2f"/><circle cx="17.6" cy="5.8" r="1.8" fill="#c8192a"/>
<path d="M31.6 7.6C34 4.6 39 4.8 40.4 7.6C41.6 13 39 20.6 35.6 23.6C32.6 24 30 22.6 29.4 20C29 15.6 30 10.6 31.6 7.6Z" fill="#f4a0a0"/><path d="M33 6.8C35 5 38.6 5.2 39.8 7.2C37.6 8.4 34.8 8.2 33 6.8Z" fill="#fbd5cf"/><circle cx="33.6" cy="5.2" r="2" fill="#f5a13a"/>
<path d="M34 26C36 21.6 42 21.6 43.6 25.6L42 30H35Z" fill="#b6d957"/><circle cx="22.6" cy="20" r="2.4" fill="#f2a07a"/><path d="M6 26C5 22.6 9.6 20 12.6 22.6L13.6 28Z" fill="#f7a93b"/>
<path d="M3 31C5 26.6 10 26.6 14 28C18 26 22 26 25 27.6C29 26 33 26.4 36 28.4C40 27.6 44.6 29 44.6 32C44.6 36 40 37 36 36.6L12 37.6C7 38 2.6 35 3 31Z" fill="#e9f4ff"/>
<text x="23.6" y="37.4" text-anchor="middle" font-family="Liberation Serif,serif" font-style="italic" font-weight="bold" font-size="12.5" fill="#3a8ddb" stroke="#fff" stroke-width="1.6" paint-order="stroke" transform="rotate(-8 24 34)" letter-spacing="-.3">Cocktail</text>
<rect x="11" y="38.6" width="23" height="6.6" rx="1" fill="#e2559f"/><text x="22.6" y="44.3" text-anchor="middle" font-family="Liberation Sans,sans-serif" font-weight="bold" font-size="6.6" fill="#fff">PARTY</text></svg><div class="abs" style="left:458.10px;top:379.15px;height:21px;line-height:21px;font-size:14px;color:#000;white-space:nowrap;font-weight:bold;transform:scaleX(0.9372);transform-origin:0 0">Đồ uống</div><div class="abs" style="left:733.00px;top:368.85px;height:21px;line-height:21px;font-size:14px;color:#3d74fc;white-space:nowrap;letter-spacing:-0.081px;text-decoration:underline;text-underline-offset:.6px;text-decoration-thickness:1px">Link Preview</div><div class="abs" style="left:732.70px;top:393.34px;height:18px;line-height:18px;font-size:12px;color:#74777f;white-space:nowrap;letter-spacing:-0.184px">Shared</div><div class="abs" style="left:895.20px;top:379.15px;height:21px;line-height:21px;font-size:14px;color:#3d74fc;white-space:nowrap;font-weight:bold;transform:scaleX(1.0774);transform-origin:0 0">0</div><div class="abs" style="left:1056.90px;top:379.15px;height:21px;line-height:21px;font-size:14px;color:#0c0c0f;white-space:nowrap;letter-spacing:0.065px">28/10/2025, 02:29</div><svg class="abs" style="left:1281px;top:376.1px" width="28" height="28" viewBox="0 0 28 28"><circle cx="14" cy="14" r="14" fill="#1a1f42"/><path d="M10.4 3.4L14 8.2L17.6 3.4" stroke="#f0604f" stroke-width="1.8" fill="none" stroke-linecap="round" stroke-linejoin="round"/><rect x="4.4" y="10.4" width="2.4" height="6.4" rx="1.2" fill="#e9ebf2"/><rect x="21.2" y="10.4" width="2.4" height="6.4" rx="1.2" fill="#e9ebf2"/><rect x="6.6" y="8" width="14.8" height="11.4" rx="5.4" fill="#fff"/><circle cx="10.8" cy="13.4" r="1.5" fill="#1a1f42"/><circle cx="17.2" cy="13.4" r="1.5" fill="#1a1f42"/><rect x="12.8" y="16.2" width="2.4" height=".9" rx=".4" fill="#f29a94"/><path d="M8.8 28C8.8 23 10.6 20.6 14 20.6C17.4 20.6 19.2 23 19.2 28Z" fill="#f4f5f9"/><path d="M5 22L7.6 21.4L7 26.6Z" fill="#e9ebf2"/><path d="M23 22L20.4 21.4L21 26.6Z" fill="#e9ebf2"/><path d="M14.2 22.6L13.6 24.6L14.6 25" stroke="#8c90a8" stroke-width=".6" fill="none"/></svg><div class="abs" style="left:1315.50px;top:369.95px;height:21px;line-height:21px;font-size:14px;color:#0c0c0f;white-space:nowrap;letter-spacing:-0.015px">Vu My Hoa</div><div class="abs" style="left:1315.50px;top:391.14px;height:18px;line-height:18px;font-size:12px;color:#83879b;white-space:nowrap;letter-spacing:0.056px">Created at: 16/10/2025, 09:02</div><div class="btn" style="left:1735px;top:370.1px;width:38px"></div><div class="btn" style="left:1780px;top:370.1px;width:38px"></div><div class="btn" style="left:1825px;top:370.1px;width:36px"></div><svg class="abs" style="left:1746.5px;top:381.8px" width="15" height="14.5" viewBox="0 0 15 14.5"><rect x="4.6" y=".6" width="9.8" height="9.8" rx="1.8" fill="none" stroke="#17181c" stroke-width="1.2"/><path d="M3 3.8H2.4C1.4 3.8 .6 4.6 .6 5.6V12.1C.6 13.1 1.4 13.9 2.4 13.9H8.9C9.9 13.9 10.7 13.1 10.7 12.1V11.6" fill="none" stroke="#17181c" stroke-width="1.2"/></svg><svg class="abs" style="left:1791.5px;top:381.8px" width="15" height="14.5" viewBox="0 0 15 14.5"><path d="M10.9 .3L14.4 3.7L12.9 5.2L9.4 1.8Z" fill="#000"/><path d="M8.6 2.6L12.1 6L4.4 13.2L.2 14.3L1.4 10.2Z" fill="#000"/><path d="M1.4 10.2L4.4 13.2" stroke="#f9fafb" stroke-width=".9"/></svg><svg class="abs" style="left:1836.5px;top:381.8px" width="13" height="14.5" viewBox="0 0 13 14.5"><path d="M.2 2.9H12.8" stroke="#000" stroke-width="1.3"/><path d="M4 2.6C4 1.2 5 .6 6.5 .6C8 .6 9 1.2 9 2.6" stroke="#000" stroke-width="1.2" fill="none"/><path d="M1.6 3.2V12C1.6 13.1 2.4 13.9 3.5 13.9H9.5C10.6 13.9 11.4 13.1 11.4 12V3.2" stroke="#000" stroke-width="1.3" fill="none"/><path d="M4.3 5V11.8M6.5 5V11.8M8.7 5V11.8" stroke="#000" stroke-width="1.1"/></svg>
<div class="ln" style="top:492.5px"></div>
<div class="abs" style="left:326.60px;top:447.55px;height:21px;line-height:21px;font-size:14px;color:#0c0c0f;white-space:nowrap">4</div><svg class="abs" style="left:397px;top:435px;border-radius:5px;overflow:hidden;box-shadow:0 1px 3px rgba(0,0,0,.13)" width="48" height="48" viewBox="0 0 48 48"><defs><radialGradient id="fg" cx=".5" cy=".42" r=".62"><stop offset="0" stop-color="#e58a55"/><stop offset=".55" stop-color="#bf4f25"/><stop offset="1" stop-color="#6e1d10"/></radialGradient></defs><rect width="48" height="48" fill="url(#fg)"/>
<text x="24" y="8.4" text-anchor="middle" font-family="Liberation Sans,sans-serif" font-weight="bold" font-style="italic" font-size="4.6" fill="#fff">Super Delicious</text>
<text x="23" y="15.2" text-anchor="middle" font-family="Liberation Sans,sans-serif" font-weight="bold" font-style="italic" font-size="7.4" fill="#ffd91a" letter-spacing=".2">BURGER</text>
<rect x="29" y="14.6" width="11" height="2.4" fill="#d8141a"/>
<path d="M14 18H27L25.6 36H15.4Z" fill="#3c1c12"/><path d="M14.4 18H26.6L26.2 22H14.8Z" fill="#6b3a28"/><path d="M17 20L19 34" stroke="#7a4632" stroke-width="1.2"/><ellipse cx="20.5" cy="18" rx="6.5" ry="1.2" fill="#8a5a48"/>
<path d="M22.6 34C23 29.6 28 27.6 32.6 27.6C37.6 27.6 42 29.8 42.6 34Z" fill="#e9a451"/><rect x="22.4" y="34" width="20.6" height="2" rx="1" fill="#5aa02c"/><rect x="22.8" y="35.6" width="19.8" height="2.6" rx="1" fill="#b3261a"/><rect x="23" y="37.8" width="19.4" height="3" rx="1.2" fill="#5a2a14"/><path d="M23 40.4H42.4C42.4 42.6 40.6 43.4 38.6 43.4H26.8C24.8 43.4 23 42.6 23 40.4Z" fill="#d9923f"/>
<path d="M3 37L8.6 34.6L24 34L27 45.4H5Z" fill="#d6a32c"/><g stroke="#f3cc4e" stroke-width=".9"><path d="M7 43L12 35M10 44L16 34.6M13 44.6L19 34.6M16 45L22 35M19 45L24 36.6M6 40L14 36M9 45L21 38"/></g>
<path d="M2 38.6L9 35.4L10 44.8H3.6Z" fill="#cfcfd6"/><path d="M40 44L46 41V45H40Z" fill="#e9e3da"/></svg><div class="abs" style="left:458.10px;top:447.55px;height:21px;line-height:21px;font-size:14px;color:#000;white-space:nowrap;font-weight:bold;transform:scaleX(0.9559);transform-origin:0 0">Fastfood</div><div class="abs" style="left:733.00px;top:436.85px;height:21px;line-height:21px;font-size:14px;color:#3d74fc;white-space:nowrap;letter-spacing:-0.081px;text-decoration:underline;text-underline-offset:.6px;text-decoration-thickness:1px">Link Preview</div><div class="abs" style="left:732.70px;top:461.74px;height:18px;line-height:18px;font-size:12px;color:#74777f;white-space:nowrap;letter-spacing:-0.184px">Shared</div><div class="abs" style="left:895.20px;top:447.55px;height:21px;line-height:21px;font-size:14px;color:#3d74fc;white-space:nowrap;font-weight:bold;transform:scaleX(1.0774);transform-origin:0 0">8</div><div class="abs" style="left:1056.90px;top:447.55px;height:21px;line-height:21px;font-size:14px;color:#0c0c0f;white-space:nowrap;letter-spacing:0.065px">28/10/2025, 02:43</div><svg class="abs" style="left:1281px;top:444.5px" width="28" height="28" viewBox="0 0 28 28"><circle cx="14" cy="14" r="14" fill="#1a1f42"/><path d="M10.4 3.4L14 8.2L17.6 3.4" stroke="#f0604f" stroke-width="1.8" fill="none" stroke-linecap="round" stroke-linejoin="round"/><rect x="4.4" y="10.4" width="2.4" height="6.4" rx="1.2" fill="#e9ebf2"/><rect x="21.2" y="10.4" width="2.4" height="6.4" rx="1.2" fill="#e9ebf2"/><rect x="6.6" y="8" width="14.8" height="11.4" rx="5.4" fill="#fff"/><circle cx="10.8" cy="13.4" r="1.5" fill="#1a1f42"/><circle cx="17.2" cy="13.4" r="1.5" fill="#1a1f42"/><rect x="12.8" y="16.2" width="2.4" height=".9" rx=".4" fill="#f29a94"/><path d="M8.8 28C8.8 23 10.6 20.6 14 20.6C17.4 20.6 19.2 23 19.2 28Z" fill="#f4f5f9"/><path d="M5 22L7.6 21.4L7 26.6Z" fill="#e9ebf2"/><path d="M23 22L20.4 21.4L21 26.6Z" fill="#e9ebf2"/><path d="M14.2 22.6L13.6 24.6L14.6 25" stroke="#8c90a8" stroke-width=".6" fill="none"/></svg><div class="abs" style="left:1315.50px;top:438.35px;height:21px;line-height:21px;font-size:14px;color:#0c0c0f;white-space:nowrap;letter-spacing:-0.015px">Vu My Hoa</div><div class="abs" style="left:1315.50px;top:459.54px;height:18px;line-height:18px;font-size:12px;color:#83879b;white-space:nowrap;letter-spacing:0.056px">Created at: 30/09/2025, 01:48</div><div class="btn" style="left:1735px;top:438.5px;width:38px"></div><div class="btn" style="left:1780px;top:438.5px;width:38px"></div><div class="btn" style="left:1825px;top:438.5px;width:36px"></div><svg class="abs" style="left:1746.5px;top:450.2px" width="15" height="14.5" viewBox="0 0 15 14.5"><rect x="4.6" y=".6" width="9.8" height="9.8" rx="1.8" fill="none" stroke="#17181c" stroke-width="1.2"/><path d="M3 3.8H2.4C1.4 3.8 .6 4.6 .6 5.6V12.1C.6 13.1 1.4 13.9 2.4 13.9H8.9C9.9 13.9 10.7 13.1 10.7 12.1V11.6" fill="none" stroke="#17181c" stroke-width="1.2"/></svg><svg class="abs" style="left:1791.5px;top:450.2px" width="15" height="14.5" viewBox="0 0 15 14.5"><path d="M10.9 .3L14.4 3.7L12.9 5.2L9.4 1.8Z" fill="#000"/><path d="M8.6 2.6L12.1 6L4.4 13.2L.2 14.3L1.4 10.2Z" fill="#000"/><path d="M1.4 10.2L4.4 13.2" stroke="#f9fafb" stroke-width=".9"/></svg><svg class="abs" style="left:1836.5px;top:450.2px" width="13" height="14.5" viewBox="0 0 13 14.5"><path d="M.2 2.9H12.8" stroke="#000" stroke-width="1.3"/><path d="M4 2.6C4 1.2 5 .6 6.5 .6C8 .6 9 1.2 9 2.6" stroke="#000" stroke-width="1.2" fill="none"/><path d="M1.6 3.2V12C1.6 13.1 2.4 13.9 3.5 13.9H9.5C10.6 13.9 11.4 13.1 11.4 12V3.2" stroke="#000" stroke-width="1.3" fill="none"/><path d="M4.3 5V11.8M6.5 5V11.8M8.7 5V11.8" stroke="#000" stroke-width="1.1"/></svg>
<div class="abs" style="left:0;top:991px;width:1919px;height:1px;background:#1d1f22"></div>
</body></html>
